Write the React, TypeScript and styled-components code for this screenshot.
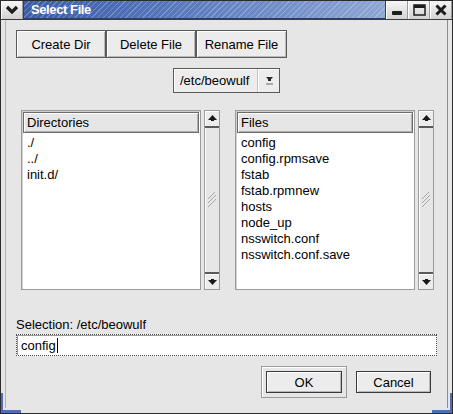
import React from "react";
import styled, { createGlobalStyle } from "styled-components";

const GlobalStyle = createGlobalStyle`
  html, body {
    margin: 0;
    padding: 0;
    background: #ffffff;
  }
  body {
    font-family: "Liberation Sans", Arial, sans-serif;
    font-size: 13px;
    color: #000;
  }
`;

const directories = ["./", "../", "init.d/"];
const files = [
  "config",
  "config.rpmsave",
  "fstab",
  "fstab.rpmnew",
  "hosts",
  "node_up",
  "nsswitch.conf",
  "nsswitch.conf.save",
];

const ArrowIcon: React.FC<{ down?: boolean }> = ({ down }) => (
  <svg width="9" height="7" viewBox="0 0 9 7">
    <g transform={down ? "rotate(180 4.5 3.5)" : undefined} fill="#1a1a1a">
      <polygon points="4.5,0 9,5 0,5" />
      <rect x="3" y="4" width="3" height="2" />
    </g>
  </svg>
);

const ListPanel: React.FC<{ title: string; items: string[] }> = ({ title, items }) => (
  <Panel>
    <ListBox>
      <ListHeader>{title}</ListHeader>
      <ListBody>
        {items.map((it) => (
          <ListItem key={it}>{it}</ListItem>
        ))}
      </ListBody>
    </ListBox>
    <ScrollBar>
      <ScrollButton>
        <ArrowIcon />
      </ScrollButton>
      <Thumb>
        <Grip viewBox="0 0 8 16" width="8" height="16">
          <line x1="0" y1="7" x2="7" y2="0" />
          <line x1="0" y1="11" x2="8" y2="3" />
          <line x1="0" y1="15" x2="8" y2="7" />
        </Grip>
      </Thumb>
      <ScrollButton $bottom>
        <ArrowIcon down />
      </ScrollButton>
    </ScrollBar>
  </Panel>
);

const App: React.FC = () => {
  return (
    <>
      <GlobalStyle />
      <Window>
        <TitleBar>
          <TitleButton>
            <svg width="14" height="10" viewBox="0 0 14 10">
              <polyline points="2,2 7,7 12,2" fill="none" stroke="#1c1c1c" strokeWidth="3.2" />
            </svg>
          </TitleButton>
          <TitleStrip>
            <TitleText>Select File</TitleText>
          </TitleStrip>
          <TitleButton>
            <svg width="14" height="14" viewBox="0 0 14 14">
              <rect x="2" y="8" width="10" height="4" rx="1" fill="#1c1c1c" />
            </svg>
          </TitleButton>
          <TitleButton>
            <svg width="14" height="14" viewBox="0 0 14 14">
              <rect x="2" y="2" width="11" height="10" fill="none" stroke="#1c1c1c" strokeWidth="1.5" />
              <rect x="2" y="2" width="11" height="3" fill="#1c1c1c" />
            </svg>
          </TitleButton>
          <TitleButton>
            <svg width="14" height="14" viewBox="0 0 14 14">
              <path d="M2.5 2.5 L11.5 11.5 M11.5 2.5 L2.5 11.5" stroke="#1c1c1c" strokeWidth="3" />
            </svg>
          </TitleButton>
        </TitleBar>
        <Body>
          <ToolRow>
            <ToolButton $w={90}>Create Dir</ToolButton>
            <ToolButton $w={90}>Delete File</ToolButton>
            <ToolButton $w={91}>Rename File</ToolButton>
          </ToolRow>
          <ComboRow>
            <Combo>
              <ComboLabel>/etc/beowulf</ComboLabel>
              <ComboArrow>
                <svg width="9" height="10" viewBox="0 0 9 10">
                  <polygon points="1,1 8,1 4.5,5" fill="#2a2a2a" />
                  <rect x="3" y="3" width="3" height="2" fill="#2a2a2a" />
                  <rect x="1" y="7" width="7" height="2" fill="#a8a8a8" />
                </svg>
              </ComboArrow>
            </Combo>
          </ComboRow>
          <ListsRow>
            <ListPanel title="Directories" items={directories} />
            <ListPanel title="Files" items={files} />
          </ListsRow>
          <SelectionLabel>Selection: /etc/beowulf</SelectionLabel>
          <Entry>
            config<Caret />
          </Entry>
          <ActionRow>
            <FocusFrame>
              <ActionButton $w={76}>OK</ActionButton>
            </FocusFrame>
            <ActionButton $w={75}>Cancel</ActionButton>
          </ActionRow>
        </Body>
        <CornerLeft />
        <CornerRight />
      </Window>
    </>
  );
};

const Window = styled.div`
  position: relative;
  width: 453px;
  height: 414px;
  box-sizing: border-box;
  background: #e6e6e6;
  border: 1px solid #2b2b2b;
  display: flex;
  flex-direction: column;
  overflow: hidden;
`;

const TitleBar = styled.div`
  display: flex;
  height: 20px;
  border-bottom: 1px solid #3c3c3c;
  background: #e2e2e2;
`;

const TitleButton = styled.div`
  width: 22px;
  flex: none;
  display: flex;
  align-items: center;
  justify-content: center;
  background: linear-gradient(#f6f6f6, #d2d2d2);
  border-left: 1px solid #ffffff;
  border-right: 1px solid #9a9a9a;
  box-sizing: border-box;
`;

const TitleStrip = styled.div`
  flex: 1;
  display: flex;
  align-items: center;
  padding-left: 7px;
  border: 1px solid #2c3e6a;
  border-top: none;
  background:
    repeating-linear-gradient(
      -45deg,
      rgba(255, 255, 255, 0) 0px,
      rgba(255, 255, 255, 0) 3px,
      rgba(255, 255, 255, 0.22) 3px,
      rgba(255, 255, 255, 0.22) 4px
    ),
    linear-gradient(90deg, #3a5ca6 0%, #5677bd 40%, #8ea6d4 100%);
`;

const TitleText = styled.span`
  font-family: "Liberation Sans", Arial, sans-serif;
  font-weight: bold;
  font-size: 13px;
  color: #ffffff;
  letter-spacing: -0.4px;
`;

const Body = styled.div`
  flex: 1;
  margin: 0 4px 5px 4px;
  border-left: 1px solid #b4b4b4;
  border-right: 1px solid #8c8c8c;
  padding: 10px;
  display: flex;
  flex-direction: column;
`;

const ToolRow = styled.div`
  display: flex;
`;

const ToolButton = styled.div<{ $w: number }>`
  width: ${(p) => p.$w}px;
  height: 28px;
  box-sizing: border-box;
  border: 1px solid #5a5a5a;
  box-shadow: inset 1px 1px 0 #ffffff, inset -1px -1px 0 #b8b8b8;
  background: #ececec;
  display: flex;
  align-items: center;
  justify-content: center;
`;

const ComboRow = styled.div`
  display: flex;
  justify-content: center;
  margin-top: 10px;
`;

const Combo = styled.div`
  width: 107px;
  height: 25px;
  box-sizing: border-box;
  border: 1px solid #5a5a5a;
  box-shadow: inset 1px 1px 0 #ffffff;
  background: #ececec;
  display: flex;
  align-items: center;
`;

const ComboLabel = styled.div`
  flex: 1;
  padding-left: 6px;
  border-right: 1px solid #c4c4c4;
  height: 100%;
  display: flex;
  align-items: center;
`;

const ComboArrow = styled.div`
  width: 20px;
  display: flex;
  align-items: center;
  justify-content: center;
  border-left: 1px solid #ffffff;
  height: 100%;
`;

const ListsRow = styled.div`
  display: flex;
  gap: 15px;
  margin-top: 17px;
  padding-left: 5px;
  height: 180px;
`;

const Panel = styled.div`
  display: flex;
  gap: 3px;
`;

const ListBox = styled.div`
  width: 180px;
  box-sizing: border-box;
  border: 1px solid #9c9c9c;
  box-shadow: inset 1px 1px 0 #cfcfcf;
  background: #ffffff;
  display: flex;
  flex-direction: column;
  padding: 1px;
`;

const ListHeader = styled.div`
  height: 21px;
  box-sizing: border-box;
  border: 1px solid #6c6c6c;
  box-shadow: inset 1px 1px 0 #ffffff, inset -1px -1px 0 #b0b0b0;
  background: #e6e6e6;
  padding-left: 3px;
  display: flex;
  align-items: center;
`;

const ListBody = styled.div`
  padding: 2px 0 0 4px;
`;

const ListItem = styled.div`
  height: 16px;
  line-height: 16px;
`;

const ScrollBar = styled.div`
  width: 16px;
  box-sizing: border-box;
  border: 1px solid #9c9c9c;
  background: #e6e6e6;
  display: flex;
  flex-direction: column;
`;

const ScrollButton = styled.div<{ $bottom?: boolean }>`
  height: 15px;
  flex: none;
  display: flex;
  align-items: center;
  justify-content: center;
  background: #ececec;
  box-shadow: inset 1px 1px 0 #ffffff;
  border-top: ${(p) => (p.$bottom ? "2px solid #5a5a5a" : "none")};
  border-bottom: ${(p) => (p.$bottom ? "none" : "2px solid #5a5a5a")};
`;

const Thumb = styled.div`
  flex: 1;
  display: flex;
  align-items: center;
  justify-content: center;
  background: #e6e6e6;
  box-shadow: inset 1px 0 0 #ffffff;
`;

const Grip = styled.svg`
  stroke: #a6a6a6;
  stroke-width: 1;
`;

const SelectionLabel = styled.div`
  margin-top: 27px;
  height: 15px;
  line-height: 15px;
`;

const Entry = styled.div`
  margin-top: 2px;
  height: 22px;
  box-sizing: border-box;
  border: 1px dotted #4a4a4a;
  box-shadow: inset 1px 1px 0 #9a9a9a;
  background: #ffffff;
  display: flex;
  align-items: center;
  padding-left: 4px;
`;

const Caret = styled.span`
  display: inline-block;
  width: 1px;
  height: 15px;
  background: #000;
  margin-left: 1px;
`;

const ActionRow = styled.div`
  display: flex;
  justify-content: flex-end;
  align-items: center;
  gap: 9px;
  margin-top: 10px;
  padding-right: 6px;
`;

const FocusFrame = styled.div`
  border: 1px solid #9a9a9a;
  box-shadow: inset 1px 1px 0 #ffffff;
  padding: 4px;
`;

const ActionButton = styled.div<{ $w: number }>`
  width: ${(p) => p.$w}px;
  height: 22px;
  box-sizing: border-box;
  border: 1px solid #3a3a3a;
  box-shadow: inset 1px 1px 0 #ffffff, inset -1px -1px 0 #b8b8b8;
  background: #ececec;
  display: flex;
  align-items: center;
  justify-content: center;
`;

const CornerLeft = styled.div`
  position: absolute;
  left: 0;
  bottom: 0;
  width: 20px;
  height: 20px;
  border-left: 2px solid #4f6fb8;
  border-bottom: 3px solid #4f6fb8;
  box-sizing: border-box;
`;

const CornerRight = styled.div`
  position: absolute;
  right: 0;
  bottom: 0;
  width: 20px;
  height: 20px;
  border-right: 2px solid #4f6fb8;
  border-bottom: 3px solid #4f6fb8;
  box-sizing: border-box;
`;

export default App;
